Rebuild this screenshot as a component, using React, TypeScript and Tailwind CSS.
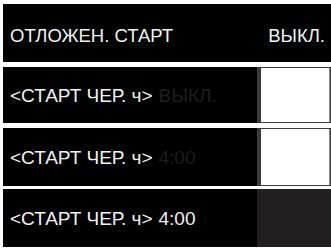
import React from "react";

type Row = {
  label: string;
  value: string;
  valueClass: string;
  box: "white" | "dark";
  rowClass: string;
};

const rows: Row[] = [
  { label: "<СТАРТ ЧЕР. ч>", value: "ВЫКЛ.", valueClass: "text-[#1e1e1e]", box: "white", rowClass: "h-[56px] mt-[5px]" },
  { label: "<СТАРТ ЧЕР. ч>", value: "4:00", valueClass: "text-[#1c1c1c]", box: "white", rowClass: "h-[58px] mt-[5px]" },
  { label: "<СТАРТ ЧЕР. ч>", value: "4:00", valueClass: "text-[#f2f2f2]", box: "dark", rowClass: "h-[58px] mt-[3px]" },
];

export default function App() {
  return (
    <div
      className="w-[331px] h-[248px] bg-white pl-[3px] pt-[4px] flex flex-col overflow-hidden"
      style={{ fontFamily: '"Liberation Sans", Arial, sans-serif' }}
    >
      {/* header */}
      <div className="h-[58px] shrink-0 bg-black flex items-center justify-between pl-[7px] pr-[6px] pt-[5px] text-[#f2f2f2] text-[18.5px]">
        <span>ОТЛОЖЕН. СТАРТ</span>
        <span>ВЫКЛ.</span>
      </div>

      {rows.map((r, i) => (
        <div key={i} className={`${r.rowClass} shrink-0 bg-black flex`}>
          <div className="flex-1 flex items-center pl-[7px] pt-[3px] text-[19px] gap-[6px]">
            <span className="text-[#f2f2f2]">{r.label}</span>
            <span className={r.valueClass}>{r.value}</span>
          </div>
          {r.box === "white" ? (
            <div className="w-[74px] bg-[#3a3a3a] p-[1px] pl-[4px]">
              <div className="w-full h-full bg-white border-r border-[#888]" />
            </div>
          ) : (
            <div className="w-[74px] bg-[#231f20]" />
          )}
        </div>
      ))}
    </div>
  );
}
